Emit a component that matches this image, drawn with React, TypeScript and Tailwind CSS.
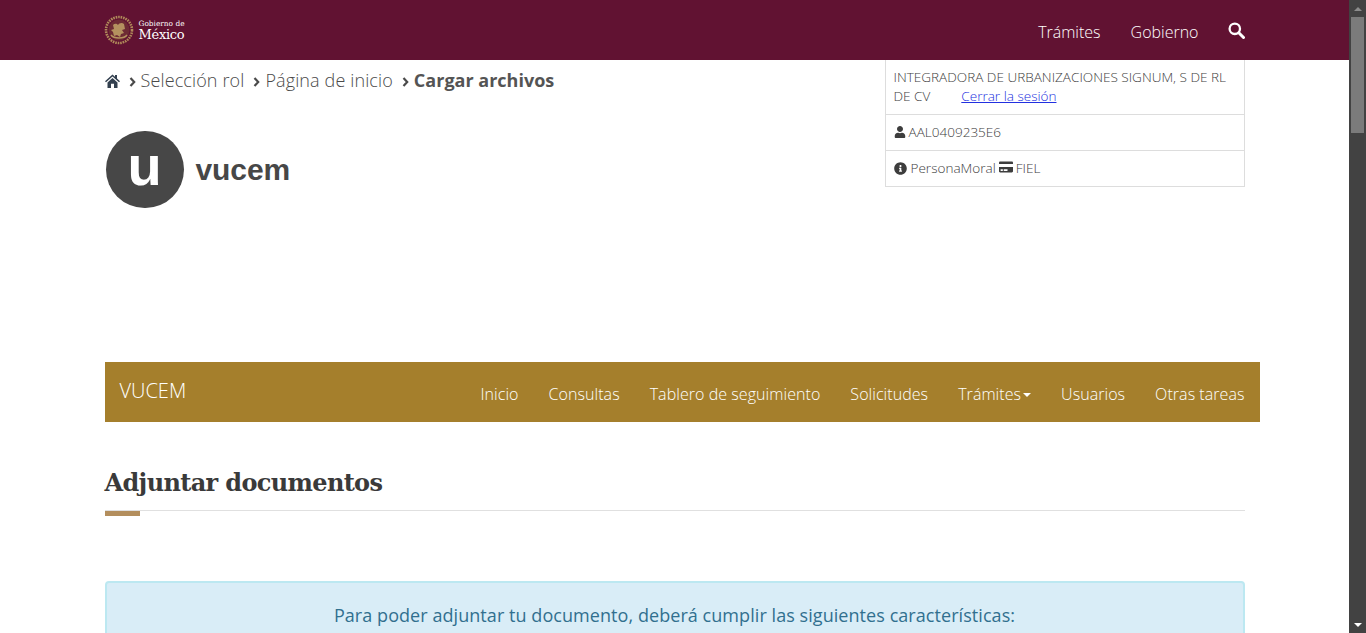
import { FaUser, FaInfoCircle, FaCreditCard } from 'react-icons/fa'

const navItems = ['Inicio', 'Consultas', 'Tablero de seguimiento', 'Solicitudes']

function Seal() {
  return (
    <svg width="30" height="30" viewBox="0 0 30 30" className="shrink-0">
      <circle cx="15" cy="15" r="13" fill="none" stroke="#b08a5a" strokeWidth="2.6" strokeDasharray="1.6 0.9" />
      <circle cx="15" cy="15" r="10.5" fill="#6d2b34" />
      <path d="M9 10c2-2 4-1 5 0 1-2 4-3 6-1l1 5-3 1 2 3-3 1-1 3-3-2-3 1-1-4-2-2 3-1z" fill="#b4915f" />
      <path d="M7 20c3 4 13 4 16 0" fill="none" stroke="#b4915f" strokeWidth="1.6" />
    </svg>
  )
}

function HomeIcon() {
  return (
    <svg width="15" height="14" viewBox="0 0 15 14" className="shrink-0">
      <path d="M7.5 0.5 0 7.2l1 1.1 6.5-5.7L14 8.3l1-1.1-3-2.7V1h-2v1.8z" fill="#33404f" />
      <path d="M2.5 8.4 7.5 4l5 4.4V14H9V9.8H6V14H2.5z" fill="#33404f" />
    </svg>
  )
}

function SearchIcon() {
  return (
    <svg width="17" height="17" viewBox="0 0 17 17" className="ml-[29px] -mt-[3px]">
      <circle cx="6.8" cy="6.8" r="5.2" fill="none" stroke="white" strokeWidth="2.3" />
      <path d="M10.8 10.8 15.5 15.5" stroke="white" strokeWidth="3" strokeLinecap="round" />
    </svg>
  )
}

function Crumb({ label, bold }: { label: string; bold?: boolean }) {
  return (
    <span className="flex items-center">
      <svg width="7" height="10" viewBox="0 0 7 10" className="mr-[5px] mt-[2px]">
        <path d="M1.5 1 5.2 5 1.5 9" fill="none" stroke="#4a4a4a" strokeWidth="2.2" />
      </svg>
      <span className={bold ? 'font-bold' : 'font-light tracking-[0.12px] text-[#4a4a4a]'}>{label}</span>
    </span>
  )
}

function Scrollbar() {
  return (
    <aside className="w-[17px] h-full bg-[#424242] flex flex-col items-center justify-between shrink-0">
      <div className="flex flex-col items-center w-full">
        <div className="h-[17px] flex items-center justify-center">
          <span className="w-0 h-0 border-x-[4px] border-x-transparent border-b-[4px] border-b-[#8c8c8c]" />
        </div>
        <div className="w-[13px] h-[116px] bg-[#7b7b7b]" />
      </div>
      <div className="h-[17px] flex items-center justify-center">
        <span className="w-0 h-0 border-x-[4px] border-x-transparent border-t-[4px] border-t-white" />
      </div>
    </aside>
  )
}

export default function App() {
  return (
    <div className="flex h-[633px] overflow-hidden bg-white font-['Open_Sans',sans-serif] text-[#545454]">
      <main className="flex-1 min-w-0 overflow-hidden">
        <header className="h-[60px] bg-[#611232]">
          <div className="w-[1170px] mx-auto px-[15px] h-full flex items-center justify-between">
            <div className="flex items-center gap-[5px] -mt-[1px] ml-[-1px]">
              <Seal />
              <div className="text-white font-['DejaVu_Serif',serif] leading-none mt-[1px]">
                <div className="text-[7.4px] leading-[8px]">Gobierno de</div>
                <div className="text-[13px] leading-[13px] tracking-[-0.3px]">México</div>
              </div>
            </div>
            <nav className="flex items-center text-white text-[16px] font-light mt-[4px]">
              <span>Trámites</span>
              <span className="ml-[30px]">Gobierno</span>
              <SearchIcon />
            </nav>
          </div>
        </header>

        <div className="w-[1170px] mx-auto">
          <div className="px-[15px] flex justify-between h-[302px]">
            <div>
              <div className="flex items-center gap-[9px] text-[18px] leading-[25px] mt-[8px]">
                <HomeIcon />
                <Crumb label="Selección rol" />
                <Crumb label="Página de inicio" />
                <Crumb label="Cargar archivos" bold />
              </div>
              <div className="flex items-center mt-[38px]">
                <div className="w-[78px] h-[77px] ml-[1px] rounded-full bg-[#474747] flex items-center justify-center">
                  <span className="text-white font-['Liberation_Sans',sans-serif] font-bold text-[56px] leading-none -mt-[7px]">u</span>
                </div>
                <span className="ml-[12px] text-[#474747] font-['Liberation_Sans',sans-serif] font-bold text-[30px] tracking-[-0.1px] leading-none">vucem</span>
              </div>
            </div>
            <div className="w-[360px] h-[127px] border-x border-b border-[#dddddd] text-[13.55px] font-light text-[#404040]">
              <div className="h-[55px] px-[8px] pt-[8px] leading-[19px] border-b border-[#dddddd]">
                <div className="whitespace-nowrap">INTEGRADORA DE URBANIZACIONES SIGNUM, S DE RL</div>
                <div className="flex gap-[31px]">
                  <span>DE CV</span>
                  <a className="text-[#2230e0] underline">Cerrar la sesión</a>
                </div>
              </div>
              <div className="h-[36px] px-[8px] flex items-center gap-[3px] border-b border-[#dddddd]">
                <FaUser className="text-[12px] text-[#3d3d3d] -mt-[2px]" />
                <span>AAL0409235E6</span>
              </div>
              <div className="h-[35px] px-[8px] flex items-center">
                <FaInfoCircle className="text-[13px] text-[#3d3d3d]" />
                <span className="ml-[4px]">PersonaMoral</span>
                <FaCreditCard className="ml-[3px] text-[14px] text-[#3d3d3d] -mt-[3px]" />
                <span className="ml-[3px]">FIEL</span>
              </div>
            </div>
          </div>

          <nav className="ml-[15px] h-[60px] bg-[#a57f2c] text-white flex items-center justify-between font-light">
            <span className="ml-[15px] text-[20px] -mt-[3px]">VUCEM</span>
            <ul className="flex items-center text-[16px] tracking-[0.06px] mt-[4px]">
              {navItems.map((item) => (
                <li key={item} className="px-[15px]">{item}</li>
              ))}
              <li className="px-[15px] flex items-center">
                Trámites
                <span className="ml-[2px] mt-[2px] w-0 h-0 border-x-[4px] border-x-transparent border-t-[4px] border-t-white" />
              </li>
              <li className="px-[15px]">Usuarios</li>
              <li className="px-[15px]">Otras tareas</li>
            </ul>
          </nav>

          <div className="px-[15px]">
            <h1 className="mt-[43px] font-['DejaVu_Serif',serif] font-bold text-[24px] leading-[36px] text-[#3a3a3a] tracking-[-0.65px]">
              Adjuntar documentos
            </h1>
            <div className="mt-[9px] h-px bg-[#e0e0e0]" />
            <div className="w-[35px] h-[5px] bg-[#b38e5d]" />
            <div className="mt-[65px] h-[120px] rounded-[4px] border-2 border-[#bce8f1] bg-[#d9edf7] text-[#31708f] text-center text-[18px] leading-[25px] pt-[20px] tracking-[0.06px]">
              Para poder adjuntar tu documento, deberá cumplir las siguientes características:
            </div>
          </div>
        </div>
      </main>
      <Scrollbar />
    </div>
  )
}
